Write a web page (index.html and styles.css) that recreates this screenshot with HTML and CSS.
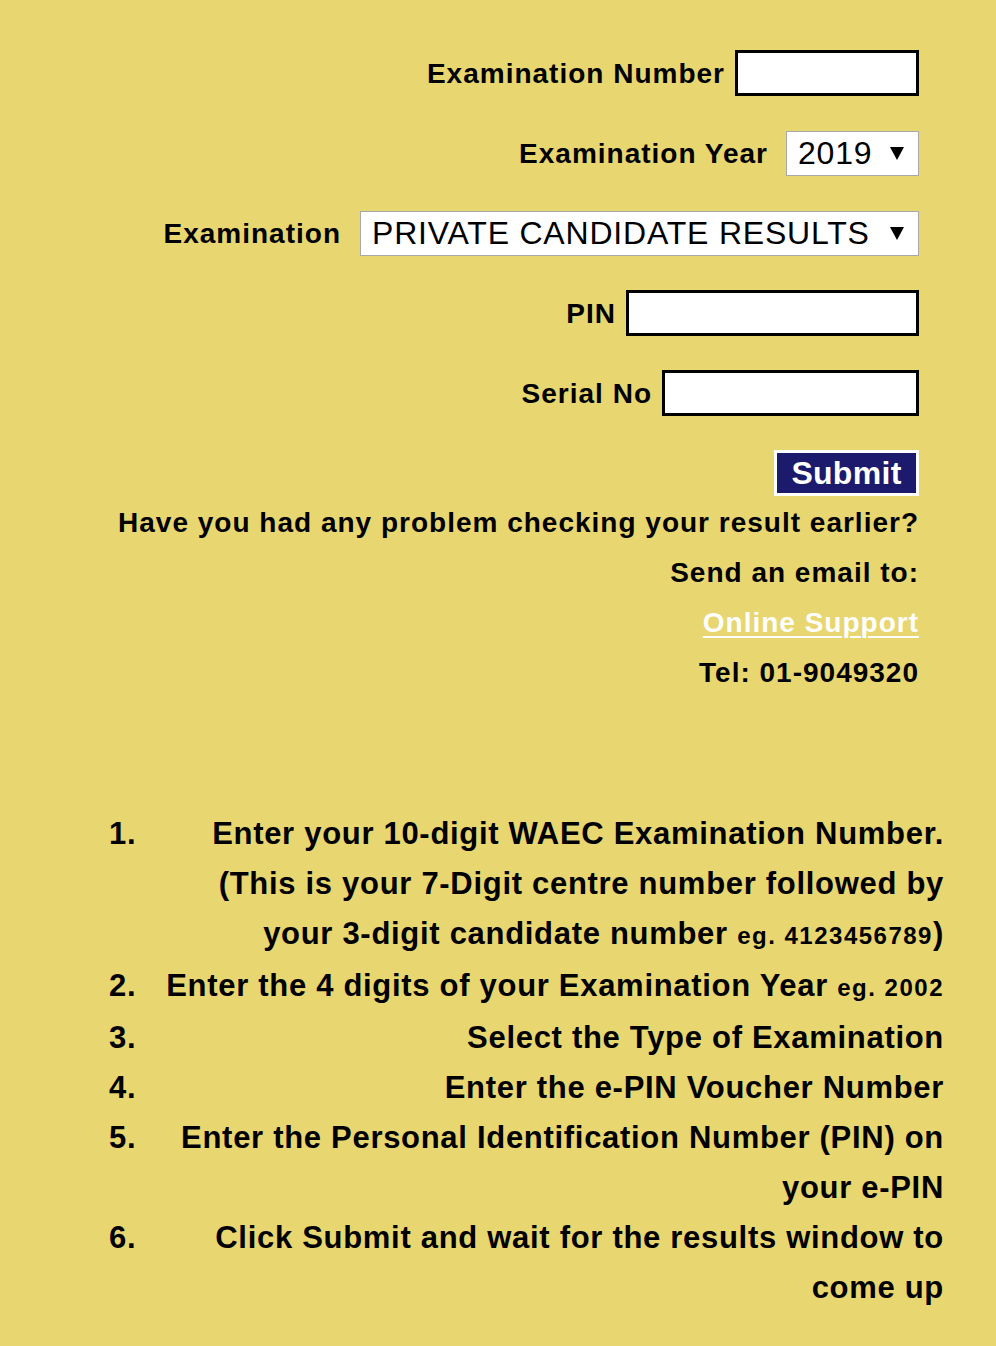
FILE: index.html
```html
<!DOCTYPE html>
<html lang="en">
<head>
<meta charset="utf-8">
<title>Check Result</title>
<link rel="stylesheet" href="styles.css">
</head>
<body>
<div class="page">
  <form class="result-form" onsubmit="return false">
    <div class="row">
      <label class="lbl" for="exno">Examination Number</label>
      <input class="field f-exno" id="exno" type="text">
    </div>
    <div class="row">
      <label class="lbl" for="exyear">Examination Year</label>
      <div class="select-wrap s-year">
        <select id="exyear" class="sel"><option>2019</option></select>
      </div>
    </div>
    <div class="row">
      <label class="lbl" for="extype">Examination</label>
      <div class="select-wrap s-type">
        <select id="extype" class="sel"><option>PRIVATE CANDIDATE RESULTS</option></select>
      </div>
    </div>
    <div class="row">
      <label class="lbl" for="pin">PIN</label>
      <input class="field f-pin" id="pin" type="text">
    </div>
    <div class="row">
      <label class="lbl" for="serial">Serial No</label>
      <input class="field f-serial" id="serial" type="text">
    </div>
    <div class="row">
      <button class="submit" type="submit">Submit</button>
    </div>
  </form>

  <div class="help">
    <p>Have you had any problem checking your result earlier?</p>
    <p>Send an email to:</p>
    <p><a class="support" href="#">Online Support</a></p>
    <p>Tel: 01-9049320</p>
  </div>

  <ol class="steps">
    <li class="step gap-after"><span class="num">1.</span><span class="txt">Enter your 10-digit WAEC Examination Number. (This is your 7-Digit centre number followed by your 3-digit candidate number <span class="eg">eg. 4123456789</span>)</span></li>
    <li class="step gap-after"><span class="num">2.</span><span class="txt">Enter the 4 digits of your Examination Year <span class="eg">eg. 2002</span></span></li>
    <li class="step"><span class="num">3.</span><span class="txt">Select the Type of Examination</span></li>
    <li class="step"><span class="num">4.</span><span class="txt">Enter the e-PIN Voucher Number</span></li>
    <li class="step"><span class="num">5.</span><span class="txt">Enter the Personal Identification Number (PIN) on your e-PIN</span></li>
    <li class="step"><span class="num">6.</span><span class="txt">Click Submit and wait for the results window to come up</span></li>
  </ol>
</div>
</body>
</html>
```

FILE: styles.css
```css
html, body {
  margin: 0;
  padding: 0;
  background: #e8d670;
}

body {
  font-family: "Liberation Sans", Arial, sans-serif;
  color: #000;
}

.page {
  padding-top: 50px;
}

.result-form {
  display: flex;
  flex-direction: column;
  gap: 34px;
  padding-right: 77px;
  margin: 0;
}

.row {
  display: flex;
  justify-content: flex-end;
  align-items: center;
  gap: 10px;
  height: 46px;
}

.lbl {
  font-weight: bold;
  font-size: 28px;
  letter-spacing: 1px;
  position: relative;
  top: 1px;
}

.field {
  box-sizing: border-box;
  height: 46px;
  border: 3px solid #000;
  background: #fff;
  margin: 0;
  padding: 0 6px;
  font-size: 24px;
  outline: none;
}

.f-exno { width: 184px; }
.f-pin { width: 293px; }
.f-serial { width: 257px; }

.select-wrap {
  position: relative;
  height: 45px;
}

.s-year { width: 133px; margin-left: 8px; }
.s-type { width: 559px; margin-left: 9px; }

.select-wrap::after {
  content: "";
  position: absolute;
  right: 15px;
  top: 16px;
  width: 0;
  height: 0;
  border-left: 7.5px solid transparent;
  border-right: 7.5px solid transparent;
  border-top: 13px solid #000;
  pointer-events: none;
}

.sel {
  -webkit-appearance: none;
  appearance: none;
  box-sizing: border-box;
  width: 100%;
  height: 45px;
  margin: 0;
  border: 1px solid #a9a9a9;
  border-radius: 0;
  background: #fff;
  color: #000;
  font-family: "Liberation Sans", Arial, sans-serif;
  font-size: 32px;
  letter-spacing: 0.8px;
  padding: 0 0 0 11px;
  line-height: 43px;
}

.submit {
  box-sizing: border-box;
  width: 145px;
  height: 46px;
  margin: 0;
  padding: 0;
  border: 3px solid #fff;
  background: #1c1a6c;
  color: #fff;
  font-family: "Liberation Sans", Arial, sans-serif;
  font-weight: bold;
  font-size: 32px;
  letter-spacing: 0.3px;
  line-height: 38px;
  cursor: pointer;
}

.help {
  padding-right: 77px;
  text-align: right;
  margin-top: 2px;
}

.help p {
  margin: 0;
  font-weight: bold;
  font-size: 28px;
  letter-spacing: 1px;
  line-height: 50px;
}

.support {
  color: #fff;
  text-decoration: underline;
  text-decoration-thickness: 2px;
  text-underline-offset: 4px;
}

.steps {
  list-style: none;
  margin: 111px 0 0 0;
  padding: 0 52px 0 109px;
}

.step {
  display: grid;
  grid-template-columns: 50px 1fr;
  font-weight: bold;
  font-size: 31px;
  letter-spacing: 0.7px;
  line-height: 50px;
}

.gap-after {
  margin-bottom: 2px;
}

.num {
  text-align: left;
}

.txt {
  text-align: right;
}

.eg {
  font-size: 24px;
  letter-spacing: 1.5px;
  line-height: 1;
}
```
